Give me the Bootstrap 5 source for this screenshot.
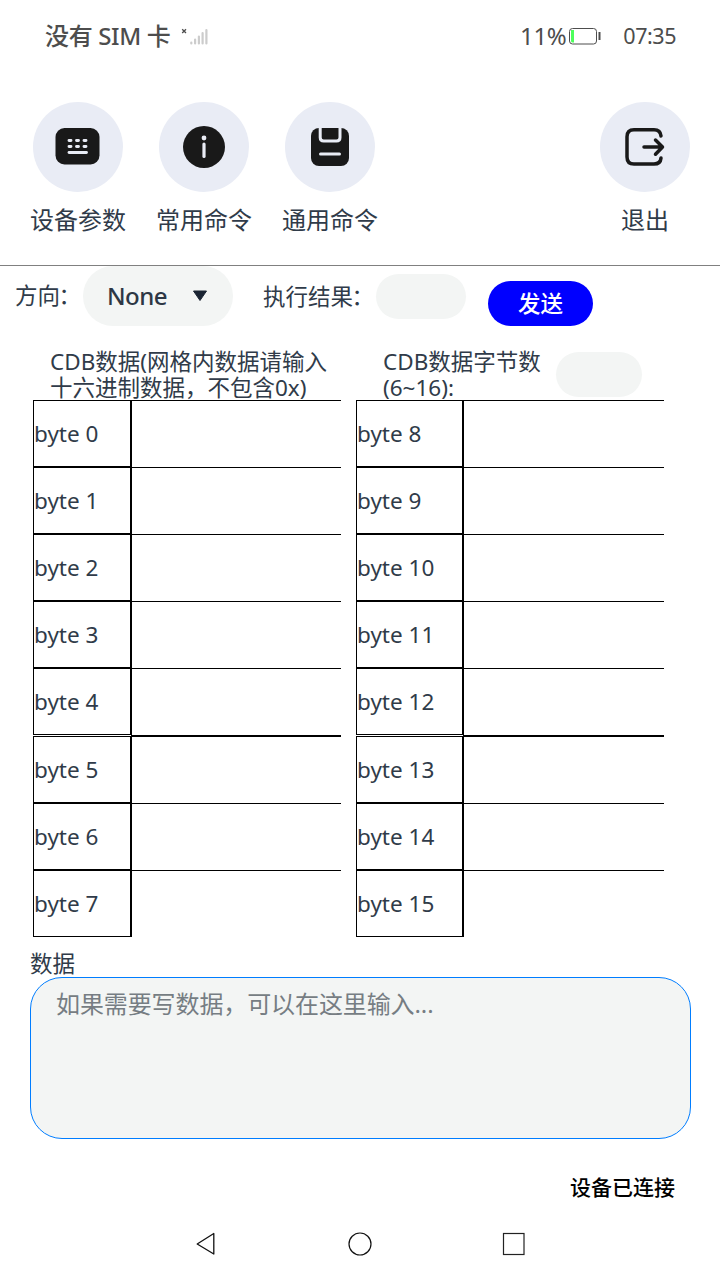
<!DOCTYPE html>
<html lang="zh-CN">
<head>
<meta charset="utf-8">
<meta name="viewport" content="width=device-width, initial-scale=1">
<title>设备命令</title>
<link href="https://cdn.jsdelivr.net/npm/bootstrap@5.3.0/dist/css/bootstrap.min.css" rel="stylesheet">
<style>
body{font-family:"Noto Sans","Noto Sans CJK SC",sans-serif;font-size:22.5px;line-height:26px;color:#303b49;background:#fff;width:720px;height:1280px;overflow:hidden;white-space:nowrap}
svg{display:block;flex:none}
.statusbar{height:71px;padding:0 44px 0 45px;color:#4d4d4d;font-size:24px}
.sim{font-weight:500;letter-spacing:-.35px}
.level{letter-spacing:-.4px}
.clock{font-size:21.5px;letter-spacing:-.45px;margin-left:22px}
.tools{height:195px;padding:31px 30px 0;border-bottom:1px solid #808080}
.tool{width:96px;margin-right:30px;font-size:24px}
.tool.exit{width:90px;margin-right:0}
.disc{width:90px;height:90px;border-radius:50%;background:#e9ecf5}
.tool-name{margin-top:15px}
.controls{height:83px;padding-left:15px}
.picker{width:150px;height:60px;border-radius:30px;padding:0 25px 0 24px;background:#f3f5f4;font-size:24px;font-weight:500;color:#2d3745;letter-spacing:-.5px}
.pill{height:45px;border-radius:22.5px;border:0;background:#f3f5f4;padding:0 12px}
.send{width:105px;height:45px;border-radius:22.5px;background:#00f;color:#fff;font-size:22.5px;font-weight:500;line-height:26px;padding:0;margin:15px 0 0 22px}
.captions{height:51px}
.grids{padding-left:33px;gap:15px}
.grid-left{width:308px}.grid-right{width:308px}
.byte-row{height:67px}
.byte-name{height:67px;width:98px;border:1px solid #000}
.grid-right .byte-name{width:107px}
.byte-value{border:solid #000;border-width:1px 0 0 1px;border-radius:0;background:none;padding:0 8px}
.byte-row.split{height:68px}
.byte-row.split .byte-value{border-top-width:2px}
.note{width:661px;height:162px;margin-left:30px;border:1px solid #007dff;border-radius:32px;background:#f3f5f4;padding:12px 25px;font-size:24px;line-height:28px;letter-spacing:-.1px;resize:none;display:block}
.note::placeholder{color:#767d83;opacity:1}
.linked{font-size:21px;font-weight:500;color:#000;padding-right:45px}
</style>
</head>
<body>
<header class="statusbar d-flex align-items-center">
  <span class="sim">没有 SIM 卡</span>
  <svg width="28" height="20" viewBox="0 0 28 20" style="margin-left:11px"><path d="M1.200 3.200l3.800 3.800M5 3.200l-3.800 3.800" stroke="#4d4d4d" stroke-width="1.300"/><path d="M10.300 16.500v1M14.100 13.500v4M17.900 10.500v7M21.600 7v10.500M25.400 4v13.500" stroke="#ccc" stroke-width="2.200" stroke-linecap="round"/></svg>
  <span class="level ms-auto">11%</span>
  <svg width="33" height="18" viewBox="0 0 33 18" style="margin-left:2px"><rect x="1.500" y="1.500" width="27" height="15.500" rx="3" fill="none" stroke="#4d4d4d"/><path d="M3 3h3v12.500H4.500Q3 15.500 3 14z" fill="#4dff5c"/><path d="M31.500 5v8" stroke="#4d4d4d" stroke-width="2"/></svg>
  <span class="clock">07:35</span>
</header>

<nav class="tools d-flex align-items-start">
  <div class="tool d-flex flex-column align-items-center">
    <div class="disc"><svg width="90" height="90"><rect x="22.500" y="26" width="44" height="36.500" rx="9" fill="#191919"/><path d="M36 38.500h2M43.500 38.500h2M51 38.500h2M36 44.500h2M43.500 44.500h2M51 44.500h2" stroke="#e9ecf5" stroke-width="2.900" stroke-linecap="round"/><path d="M36 50.500h17.500" stroke="#e9ecf5" stroke-width="2.800" stroke-linecap="round"/></svg></div>
    <div class="tool-name">设备参数</div>
  </div>
  <div class="tool d-flex flex-column align-items-center">
    <div class="disc"><svg width="90" height="90"><circle cx="45" cy="45" r="21" fill="#191919"/><circle cx="45" cy="36" r="2.400" fill="#e9ecf5"/><path d="M45 42v12.500" stroke="#e9ecf5" stroke-width="3.200" stroke-linecap="round"/></svg></div>
    <div class="tool-name">常用命令</div>
  </div>
  <div class="tool d-flex flex-column align-items-center">
    <div class="disc"><svg width="90" height="90"><rect x="26" y="26" width="38" height="38" rx="8" fill="#191919"/><path d="M35.200 25v10.500Q35.200 39 38.700 39H51.500Q55 39 55 35.500V25" fill="none" stroke="#e9ecf5" stroke-width="3"/><path d="M35.500 52h19" stroke="#e9ecf5" stroke-width="3" stroke-linecap="round"/></svg></div>
    <div class="tool-name">通用命令</div>
  </div>
  <div class="tool exit ms-auto d-flex flex-column align-items-center">
    <div class="disc"><svg width="90" height="90" fill="none" stroke="#191919" stroke-width="3.500" stroke-linecap="round" stroke-linejoin="round"><path d="M61 34Q60.500 27.700 54 27.700H34Q27 27.700 27 34.700V55Q27 62 34 62H54Q60.500 62 61 56"/><path d="M44 45h18M55.500 38l7 7-7 7.200"/></svg></div>
    <div class="tool-name">退出</div>
  </div>
</nav>

<section class="controls d-flex align-items-start">
  <label style="width:68px;padding-top:17px">方向<span style="margin-left:-1.500px">：</span></label>
  <div class="picker d-flex align-items-center justify-content-between" role="button">None<svg width="16" height="12" viewBox="0 0 16 12"><path d="M1.500 1h13L8 10.500z" fill="#1a2433" stroke="#1a2433" stroke-linejoin="round"/></svg></div>
  <label style="width:113px;margin-left:30px;padding-top:18px">执行结果<span style="margin-left:-1.500px">：</span></label>
  <input class="pill" type="text" style="width:90px;margin-top:8px" aria-label="执行结果">
  <button class="btn send">发送</button>
</section>

<section class="captions d-flex">
  <div style="width:333px;margin-left:50px">CDB数据(网格内数据请输入<br>十六进制数据，不包含0x)</div>
  <div style="width:173px">CDB数据字节数<br>(6~16):</div>
  <input class="pill" type="text" style="width:86px;margin-top:3px" aria-label="字节数">
</section>

<main class="grids d-flex" id="grids"></main>

<div style="margin-left:30px;padding-top:14px;height:40px">数据</div>
<textarea class="note" placeholder="如果需要写数据，可以在这里输入..."></textarea>
<div class="linked text-end" style="margin-top:35px">设备已连接</div>
<footer class="d-flex justify-content-center" style="margin-top:32px;gap:130px">
  <svg width="24" height="24" fill="none" stroke="#111" stroke-width="1.300" stroke-linejoin="round"><path d="M19.800 1.500v20.500L3.200 12z"/></svg>
  <svg width="24" height="26" fill="none" stroke="#111" stroke-width="1.200"><circle cx="12" cy="12" r="11"/></svg>
  <svg width="24" height="24" fill="none" stroke="#222" stroke-width="1.200"><rect x="1.500" y="1.500" width="20.500" height="21"/></svg>
</footer>

<script src="https://cdn.jsdelivr.net/npm/bootstrap@5.3.0/dist/js/bootstrap.bundle.min.js"></script>
<script>
const grids = document.getElementById('grids');
[['grid-left', 0], ['grid-right', 8]].forEach(([name, first]) => {
  const grid = document.createElement('div');
  grid.className = name;
  for (let i = 0; i < 8; i++) {
    grid.innerHTML += `<div class="byte-row d-flex align-items-end${i === 5 ? ' split' : ''}">
      <div class="byte-name d-flex align-items-center flex-shrink-0">byte ${first + i}</div>
      <input class="byte-value flex-grow-1 h-100" type="text" size="1" aria-label="byte ${first + i}"></div>`;
  }
  grids.append(grid);
});
</script>
</body>
</html>
